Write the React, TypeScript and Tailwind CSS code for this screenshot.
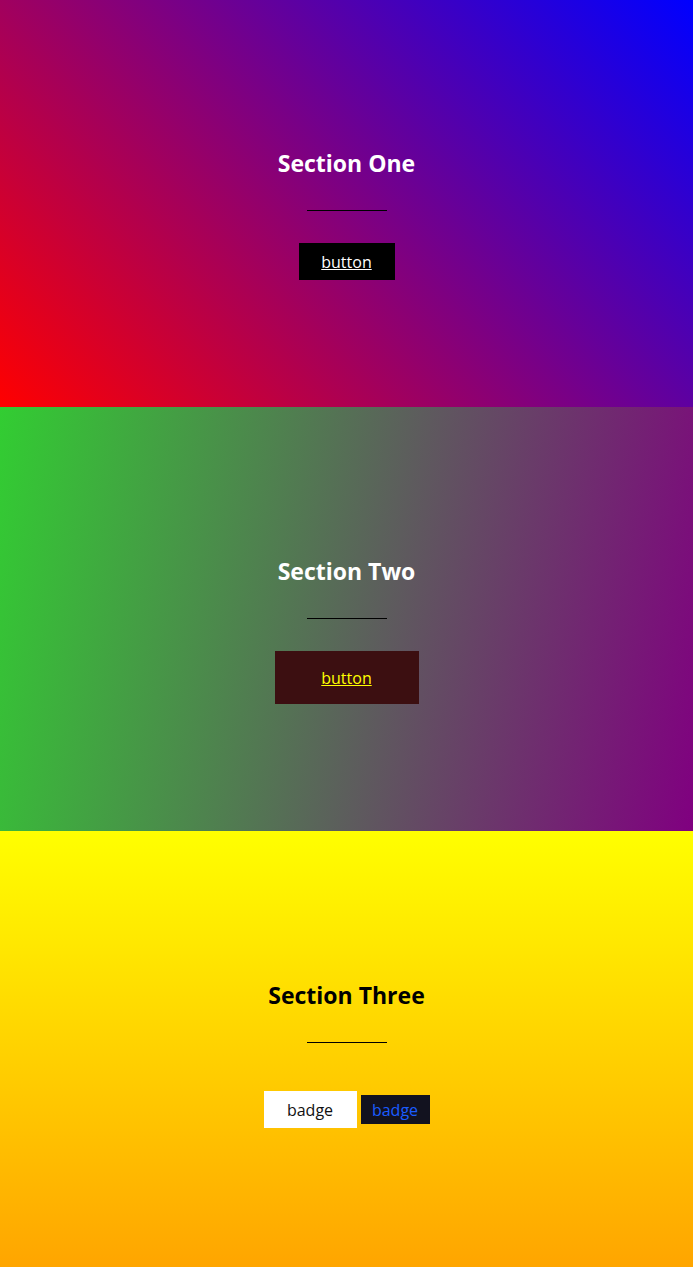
export default function App() {
    return (
        <div className="font-['Open_Sans',sans-serif]">
            {/* Section one */}
            <section className="h-[407px] flex flex-col items-center pt-[149px] bg-[linear-gradient(45deg,#ff0000,#0000ff)]">
                <h2 className="text-[23px] leading-[29px] font-bold text-white">Section One</h2>
                <hr className="w-20 mt-[32px] border-0 border-t border-black" />
                <a
                    href="#"
                    className="mt-[32px] w-[96px] h-[37px] flex items-center justify-center bg-black text-white underline text-base"
                >
                    button
                </a>
            </section>

            {/* Section two */}
            <section className="h-[424px] flex flex-col items-center pt-[150px] bg-[linear-gradient(100deg,#32cd32,#800080)]">
                <h2 className="text-[23px] leading-[29px] font-bold text-white">Section Two</h2>
                <hr className="w-20 mt-[32px] border-0 border-t border-black" />
                <a
                    href="#"
                    className="mt-[32px] w-[144px] h-[53px] flex items-center justify-center bg-[#3c0f11] text-[#ffff00] underline text-base"
                >
                    button
                </a>
            </section>

            {/* Section three */}
            <section className="h-[436px] flex flex-col items-center pt-[150px] bg-[linear-gradient(to_bottom,#ffff00,#ffa500)]">
                <h2 className="text-[23px] leading-[29px] font-bold text-black">Section Three</h2>
                <hr className="w-20 mt-[32px] border-0 border-t border-black" />
                <div className="mt-[48px] flex items-center gap-1">
                    <span className="w-[93px] h-[37px] flex items-center justify-center bg-white text-[#111] text-base">
                        badge
                    </span>
                    <span className="w-[69px] h-[29px] flex items-center justify-center bg-[#12121f] text-[#1a5cff] text-base">
                        badge
                    </span>
                </div>
            </section>
        </div>
    );
}
